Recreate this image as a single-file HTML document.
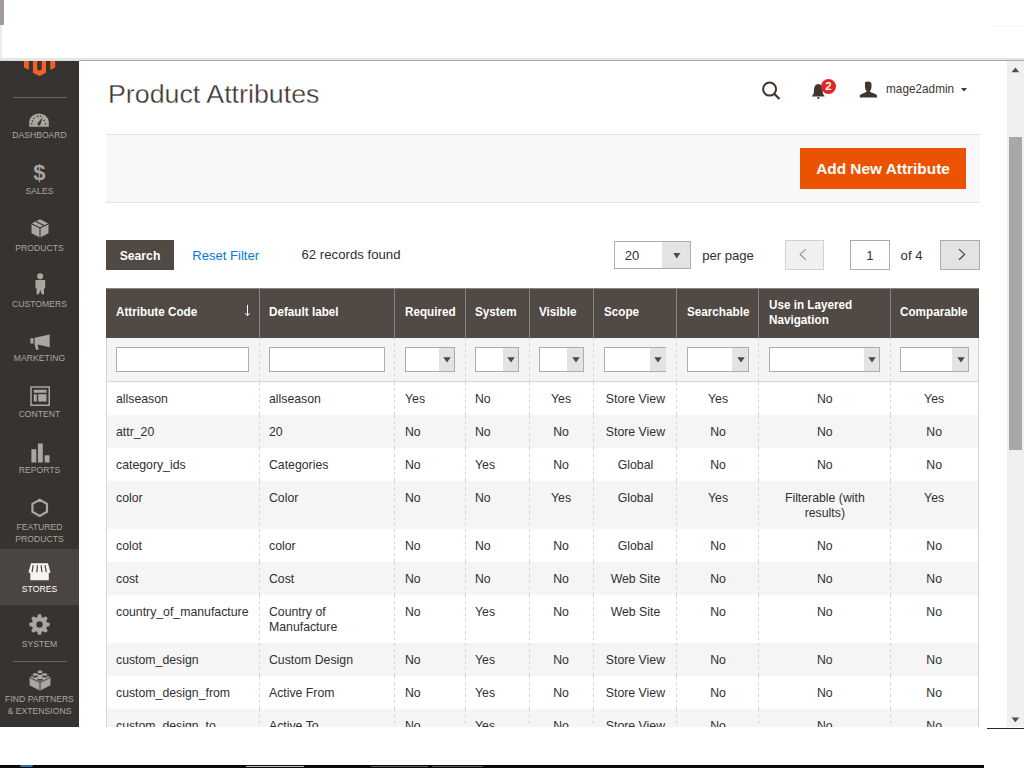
<!DOCTYPE html>
<html><head><meta charset="utf-8"><title>Product Attributes</title>
<style>
html,body{margin:0;padding:0;width:1024px;height:768px;overflow:hidden;background:#fff}
body{position:relative;font-family:"Liberation Sans",sans-serif}
body div, body svg{position:absolute}
.t{white-space:nowrap}
</style></head><body>
<div style="left:0px;top:0px;width:3.5px;height:25px;background:#a39c9c"></div>
<div style="left:0px;top:25px;width:2px;height:33px;background:#ececec"></div>
<div style="left:991px;top:26px;width:33px;height:1px;background:#f6f6f4"></div>
<div style="left:0px;top:58px;width:1024px;height:2px;background:#e6e6e6"></div>
<div style="left:79px;top:60px;width:945px;height:1px;background:#ababab"></div>
<div style="left:0px;top:60px;width:79px;height:1px;background:#dcdcdc"></div>
<div id="vp" style="left:0;top:61px;width:1007px;height:666px;overflow:hidden;background:#fff">
<div style="left:0;top:-61px;width:1007px;height:800px;">
<div style="left:0px;top:61px;width:79px;height:666px;background:#373330"></div>
<div style="left:0px;top:548.5px;width:79px;height:56.7px;background:#4a4542"></div>
<svg style="position:absolute;left:0;top:0" width="79" height="80" viewBox="0 0 79 80"><path fill="#ef6424" d="M23.9 61H28.8V69.7L23.9 67.4Z M50.3 61H55.2V67.4L50.3 69.7Z M32.9 61H37.2V69.5L39.5 70.7L41.7 69.5V61H46V72.8L39.5 76L32.9 72.8Z"/></svg>
<div style="left:13px;top:97px;width:54px;height:1px;background:#6f6660"></div>
<div style="left:13px;top:661px;width:54px;height:1px;background:#6f6660"></div>
<div class="t" style="left:0px;top:129.37px;font-size:9.6px;line-height:12.0px;color:#aaa6a0;width:79px;text-align:center;transform:scaleX(0.9);transform-origin:50% 0;">DASHBOARD</div>
<div class="t" style="left:0px;top:185.37px;font-size:9.6px;line-height:12.0px;color:#aaa6a0;width:79px;text-align:center;transform:scaleX(0.9);transform-origin:50% 0;">SALES</div>
<div class="t" style="left:0px;top:241.67px;font-size:9.6px;line-height:12.0px;color:#aaa6a0;width:79px;text-align:center;transform:scaleX(0.9);transform-origin:50% 0;">PRODUCTS</div>
<div class="t" style="left:0px;top:297.67px;font-size:9.6px;line-height:12.0px;color:#aaa6a0;width:79px;text-align:center;transform:scaleX(0.9);transform-origin:50% 0;">CUSTOMERS</div>
<div class="t" style="left:0px;top:352.37px;font-size:9.6px;line-height:12.0px;color:#aaa6a0;width:79px;text-align:center;transform:scaleX(0.9);transform-origin:50% 0;">MARKETING</div>
<div class="t" style="left:0px;top:408.37px;font-size:9.6px;line-height:12.0px;color:#aaa6a0;width:79px;text-align:center;transform:scaleX(0.9);transform-origin:50% 0;">CONTENT</div>
<div class="t" style="left:0px;top:464.47px;font-size:9.6px;line-height:12.0px;color:#aaa6a0;width:79px;text-align:center;transform:scaleX(0.9);transform-origin:50% 0;">REPORTS</div>
<div class="t" style="left:0px;top:520.97px;font-size:9.6px;line-height:12.0px;color:#aaa6a0;width:79px;text-align:center;transform:scaleX(0.9);transform-origin:50% 0;">FEATURED</div>
<div class="t" style="left:0px;top:532.57px;font-size:9.6px;line-height:12.0px;color:#aaa6a0;width:79px;text-align:center;transform:scaleX(0.9);transform-origin:50% 0;">PRODUCTS</div>
<div class="t" style="left:0px;top:582.77px;font-size:9.6px;line-height:12.0px;color:#ffffff;width:79px;text-align:center;transform:scaleX(0.9);transform-origin:50% 0;">STORES</div>
<div class="t" style="left:0px;top:637.77px;font-size:9.6px;line-height:12.0px;color:#aaa6a0;width:79px;text-align:center;transform:scaleX(0.9);transform-origin:50% 0;">SYSTEM</div>
<div class="t" style="left:0px;top:693.37px;font-size:9.6px;line-height:12.0px;color:#aaa6a0;width:79px;text-align:center;transform:scaleX(0.9);transform-origin:50% 0;">FIND PARTNERS</div>
<div class="t" style="left:0px;top:705.07px;font-size:9.6px;line-height:12.0px;color:#aaa6a0;width:79px;text-align:center;transform:scaleX(0.9);transform-origin:50% 0;">&amp; EXTENSIONS</div>
<svg style="position:absolute;left:29px;top:112.5px" width="20" height="15" viewBox="0 0 20 15"><path fill="#aaa6a0" d="M0.2 13.8V9A9.8 8.6 0 0 1 19.8 9V13.8Z"/><g fill="#373330"><circle cx="5" cy="5.2" r="0.8"/><circle cx="3.5" cy="8" r="0.8"/><circle cx="2.8" cy="10.8" r="0.8"/><circle cx="8.5" cy="3.2" r="0.8"/><circle cx="11.5" cy="3.2" r="0.8"/><circle cx="15" cy="7.5" r="0.8"/><circle cx="16.5" cy="10.8" r="0.8"/></g><path fill="#373330" d="M8.6 10.3L13.6 4.2L11.3 11.7A1.5 1.5 0 1 1 8.6 10.3Z"/></svg>
<div class="t" style="left:33.3px;top:159.6px;font-size:22px;line-height:26px;font-weight:bold;color:#aaa6a0">$</div>
<svg style="position:absolute;left:30.5px;top:218.5px" width="18" height="19" viewBox="0 0 18 19"><path fill="#aaa6a0" d="M9 0.3L17.5 4.5V14.2L9 18.5L0.5 14.2V4.5Z"/><path fill="none" stroke="#373330" stroke-width="1.1" d="M0.5 4.7L9 9L17.5 4.7 M9 9V18.5 M5 2.5L13.5 6.8"/></svg>
<svg style="position:absolute;left:34.5px;top:272.5px" width="11" height="22" viewBox="0 0 11 22"><circle cx="5.2" cy="3.2" r="3" fill="#aaa6a0"/><path fill="#aaa6a0" d="M0.5 7H10.2V15L9 15.5V21.3H6.7L5.3 17L3.9 21.3H1.6V15.5L0.5 15Z"/></svg>
<svg style="position:absolute;left:29.5px;top:333.5px" width="20" height="16" viewBox="0 0 20 16"><path fill="#aaa6a0" d="M0.4 4.3H3.5V9.4H0.4Z M4.6 3.7L19.7 0.4V13.3L7.6 10.6L8.6 15.8H6L4.6 10.2Z"/></svg>
<svg style="position:absolute;left:29.5px;top:385.5px" width="21" height="21" viewBox="0 0 21 21"><path fill="none" stroke="#aaa6a0" stroke-width="1.5" d="M1.05 1.05H19.25V19.25H1.05Z"/><path fill="#aaa6a0" d="M3.8 3.8H16.5V6.8H3.8Z M3.8 8.2H6.8V15.5H3.8Z M8.2 8.2H16.5V15.5H8.2Z"/></svg>
<svg style="position:absolute;left:30.5px;top:442.5px" width="20" height="20" viewBox="0 0 20 20"><path fill="#aaa6a0" d="M0.4 6.3H5.3V19.4H0.4Z M6.9 0.4H11.8V19.4H6.9Z M13.6 12.3H18.5V19.4H13.6Z"/></svg>
<svg style="position:absolute;left:31px;top:497.5px" width="18" height="20" viewBox="0 0 18 20"><path fill="none" stroke="#aaa6a0" stroke-width="2.2" stroke-linejoin="miter" d="M8.7 1.73L15.95 5.92V13.78L8.7 17.97L1.45 13.78V5.92Z"/></svg>
<svg style="position:absolute;left:28px;top:562.5px" width="23" height="18" viewBox="0 0 23 18"><path fill="#f7f3ef" d="M3 0.3H20L22.5 9.5L20.8 10.2V17.3H2.3V10.2L0.5 9.5Z"/><path fill="none" stroke="#4a4542" stroke-width="1.2" d="M5.1 2.2L4.1 9.2 M9.4 2.2L8.8 9.2 M13.1 2.2L13.9 9.2 M17 2.2L18.3 9.2"/></svg>
<svg style="position:absolute;left:28.85px;top:614.1px" width="21" height="21" viewBox="0 0 21 21"><path fill="#aaa6a0" d="M8.28 3.23L8.98 0.31L12.02 0.31L12.72 3.23L14.07 3.79L16.63 2.22L18.78 4.37L17.21 6.93L17.77 8.28L20.69 8.98L20.69 12.02L17.77 12.72L17.21 14.07L18.78 16.63L16.63 18.78L14.07 17.21L12.72 17.77L12.02 20.69L8.98 20.69L8.28 17.77L6.93 17.21L4.37 18.78L2.22 16.63L3.79 14.07L3.23 12.72L0.31 12.02L0.31 8.98L3.23 8.28L3.79 6.93L2.22 4.37L4.37 2.22L6.93 3.79Z"/><circle cx="10.5" cy="10.5" r="3.2" fill="#373330"/></svg>
<svg style="position:absolute;left:28.5px;top:669px" width="22" height="23" viewBox="0 0 22 23"><path fill="#aaa6a0" d="M0.6 8.2L11 3L21.5 8.2V16.2L11 21.7L0.6 16.2Z"/><path fill="none" stroke="#373330" stroke-width="0.9" d="M0.6 8.4L11 13.4L21.5 8.4 M11 13.4V21.7"/><ellipse cx="11" cy="4.2" rx="2.7" ry="1.5" fill="#373330"/><ellipse cx="11" cy="2.9" rx="2.6" ry="1.4" fill="#aaa6a0"/><ellipse cx="6.1" cy="6.8999999999999995" rx="2.7" ry="1.5" fill="#373330"/><ellipse cx="6.1" cy="5.6" rx="2.6" ry="1.4" fill="#aaa6a0"/><ellipse cx="15.9" cy="6.8999999999999995" rx="2.7" ry="1.5" fill="#373330"/><ellipse cx="15.9" cy="5.6" rx="2.6" ry="1.4" fill="#aaa6a0"/><ellipse cx="11" cy="10.200000000000001" rx="2.7" ry="1.5" fill="#373330"/><ellipse cx="11" cy="8.9" rx="2.6" ry="1.4" fill="#aaa6a0"/></svg>
<div class="t" style="left:107.8px;top:78.92px;font-size:25.4px;line-height:31.75px;color:#41362f;-webkit-text-stroke:0.3px #fff;transform:scaleX(1.055);transform-origin:0 0;">Product Attributes</div>
<svg style="position:absolute;left:760px;top:80px" width="22" height="22" viewBox="0 0 22 22"><circle cx="9.6" cy="9.1" r="6.5" fill="none" stroke="#41362f" stroke-width="2"/><path d="M14.2 13.8L19.5 19" stroke="#41362f" stroke-width="2.2"/></svg>
<svg style="position:absolute;left:810px;top:80px" width="20" height="20" viewBox="0 0 20 20"><path fill="#41362f" d="M2 16.6L2.2 15.8Q3.8 14.8 3.9 12L4 9.5Q4.3 4.4 8.3 4.1Q12.3 4.4 12.6 9.5L12.7 12Q12.8 14.8 14.4 15.8L14.6 16.6Z"/><ellipse cx="8.3" cy="17.9" rx="1.3" ry="0.9" fill="#41362f"/></svg>
<div style="left:821px;top:78.8px;width:15px;height:15px;border-radius:50%;background:#e22626"></div>
<div class="t" style="left:821px;top:79.42px;font-size:11.3px;line-height:14.12px;color:#fff;font-weight:bold;width:15px;text-align:center;">2</div>
<svg style="position:absolute;left:859px;top:80.5px" width="19" height="17" viewBox="0 0 19 17"><path fill="#41362f" d="M6 1.5Q6.5 0.4 9 0.4Q12 0.4 12.5 2.5V6.5Q12 9 11 10V10.8L17.3 13.5Q18 14 18 15V16.5H0.8V15Q0.8 14 1.6 13.5L7.6 10.8V10Q6.2 8.8 6 6.5Z"/></svg>
<div class="t" style="left:885.5px;top:82.06px;font-size:12.6px;line-height:15.75px;color:#41362f;transform:scaleX(0.936);transform-origin:0 0;">mage2admin</div>
<svg style="position:absolute;left:961px;top:88px" width="6" height="4" viewBox="0 0 6 4"><path d="M0 0H6L3 3.6Z" fill="#41362f"/></svg>
<div style="left:106px;top:134px;width:874px;height:69px;background:#f8f8f8;border-top:1px solid #e3e3e3;border-bottom:1px solid #e3e3e3;box-sizing:border-box"></div>
<div style="left:800px;top:148px;width:166px;height:41px;background:#eb5202"></div>
<div class="t" style="left:800px;top:158.64px;font-size:15.4px;line-height:19.25px;color:#fff;font-weight:bold;width:166px;text-align:center;">Add New Attribute</div>
<div style="left:106px;top:240px;width:68px;height:30px;background:#514943"></div>
<div class="t" style="left:106px;top:248.75px;font-size:12.2px;line-height:15.25px;color:#fff;font-weight:bold;width:68px;text-align:center;">Search</div>
<div class="t" style="left:192.3px;top:247.90px;font-size:13.07px;line-height:16.34px;color:#007bdb;">Reset Filter</div>
<div class="t" style="left:301.5px;top:246.68px;font-size:13.2px;line-height:16.5px;color:#303030;">62 records found</div>
<div style="left:614.4px;top:241.4px;width:76.2px;height:27.3px;background:#fff;border:1px solid #adadad;box-sizing:border-box"></div>
<div style="left:662px;top:242.4px;width:27.6px;height:25.3px;background:#e3e3e3"></div>
<svg style="position:absolute;left:673px;top:253px" width="8" height="6" viewBox="0 0 8 6"><path d="M0.3 0H7.3L3.8 5.6Z" fill="#514943"/></svg>
<div class="t" style="left:624.8px;top:247.77px;font-size:13.1px;line-height:16.38px;color:#303030;">20</div>
<div class="t" style="left:702.2px;top:247.77px;font-size:13.1px;line-height:16.38px;color:#303030;">per page</div>
<div style="left:785px;top:240.2px;width:39px;height:29.7px;background:#f0f0f0;border:1px solid #d1d1d1;box-sizing:border-box"></div>
<svg style="position:absolute;left:796px;top:247px" width="14" height="16" viewBox="0 0 14 16"><path d="M9.8 2.1L4.2 7.4L9.8 12.7" fill="none" stroke="#a09a96" stroke-width="1.3"/></svg>
<div style="left:850.3px;top:240.2px;width:39.4px;height:29.7px;background:#fff;border:1px solid #adadad;box-sizing:border-box"></div>
<div class="t" style="left:850.3px;top:248.47px;font-size:13.1px;line-height:16.38px;color:#303030;width:39.4px;text-align:center;">1</div>
<div class="t" style="left:900.6px;top:247.77px;font-size:13.1px;line-height:16.38px;color:#303030;">of 4</div>
<div style="left:940.4px;top:240.2px;width:39.6px;height:29.7px;background:#e3e3e3;border:1px solid #adadad;box-sizing:border-box"></div>
<svg style="position:absolute;left:955px;top:247px" width="14" height="16" viewBox="0 0 14 16"><path d="M4 2.1L9.6 7.4L4 12.7" fill="none" stroke="#514943" stroke-width="1.3"/></svg>
<div style="left:106.4px;top:288px;width:872.2px;height:50px;background:#514943;border-top:1px solid #8a837f;box-sizing:border-box"></div>
<div style="left:258.7px;top:288px;width:1px;height:50px;background:#8a837f"></div>
<div style="left:394.1px;top:288px;width:1px;height:50px;background:#8a837f"></div>
<div style="left:464.9px;top:288px;width:1px;height:50px;background:#8a837f"></div>
<div style="left:528.9px;top:288px;width:1px;height:50px;background:#8a837f"></div>
<div style="left:593.1px;top:288px;width:1px;height:50px;background:#8a837f"></div>
<div style="left:676.0px;top:288px;width:1px;height:50px;background:#8a837f"></div>
<div style="left:758.1px;top:288px;width:1px;height:50px;background:#8a837f"></div>
<div style="left:889.8px;top:288px;width:1px;height:50px;background:#8a837f"></div>
<div class="t" style="left:116.4px;top:304.65px;font-size:12.4px;line-height:15.5px;color:#fff;font-weight:bold;transform:scaleX(0.944);transform-origin:0 0;">Attribute Code</div>
<div class="t" style="left:269.2px;top:304.65px;font-size:12.4px;line-height:15.5px;color:#fff;font-weight:bold;transform:scaleX(0.944);transform-origin:0 0;">Default label</div>
<div class="t" style="left:404.6px;top:304.65px;font-size:12.4px;line-height:15.5px;color:#fff;font-weight:bold;transform:scaleX(0.944);transform-origin:0 0;">Required</div>
<div class="t" style="left:475.4px;top:304.65px;font-size:12.4px;line-height:15.5px;color:#fff;font-weight:bold;transform:scaleX(0.944);transform-origin:0 0;">System</div>
<div class="t" style="left:539.4px;top:304.65px;font-size:12.4px;line-height:15.5px;color:#fff;font-weight:bold;transform:scaleX(0.944);transform-origin:0 0;">Visible</div>
<div class="t" style="left:603.6px;top:304.65px;font-size:12.4px;line-height:15.5px;color:#fff;font-weight:bold;transform:scaleX(0.944);transform-origin:0 0;">Scope</div>
<div class="t" style="left:686.5px;top:304.65px;font-size:12.4px;line-height:15.5px;color:#fff;font-weight:bold;transform:scaleX(0.944);transform-origin:0 0;">Searchable</div>
<div class="t" style="left:900.3px;top:304.65px;font-size:12.4px;line-height:15.5px;color:#fff;font-weight:bold;transform:scaleX(0.944);transform-origin:0 0;">Comparable</div>
<div class="t" style="left:768.6px;top:297.95px;font-size:12.4px;line-height:15.5px;color:#fff;font-weight:bold;transform:scaleX(0.944);transform-origin:0 0;">Use in Layered</div>
<div class="t" style="left:768.6px;top:312.55px;font-size:12.4px;line-height:15.5px;color:#fff;font-weight:bold;transform:scaleX(0.944);transform-origin:0 0;">Navigation</div>
<svg style="position:absolute;left:243.5px;top:304px" width="7" height="13" viewBox="0 0 7 13"><path d="M3.5 0.8V11.5" stroke="#fff" stroke-width="1"/><path d="M1.3 9.2L3.5 11.8L5.7 9.2" fill="none" stroke="#fff" stroke-width="1"/></svg>
<div style="left:106.4px;top:338px;width:872.2px;height:43.80000000000001px;background:#f4f4f4;border-bottom:1px solid #d6d6d6;box-sizing:border-box"></div>
<div style="left:116.4px;top:347.3px;width:132.79999999999998px;height:24.4px;background:#fff;border:1px solid #adadad;box-sizing:border-box"></div>
<div style="left:269.2px;top:347.3px;width:115.40000000000003px;height:24.4px;background:#fff;border:1px solid #adadad;box-sizing:border-box"></div>
<div style="left:404.6px;top:347.3px;width:50.799999999999955px;height:24.399999999999977px;background:#fff;border:1px solid #adadad;box-sizing:border-box"></div>
<div style="left:438.9px;top:348.3px;width:15.5px;height:22.399999999999977px;background:#e3e3e3"></div>
<svg style="position:absolute;left:443.3px;top:356.7px" width="8" height="6" viewBox="0 0 8 6"><path d="M0.25 0.2H7.75L4 5.5Z" fill="#514943"/></svg>
<div style="left:475.4px;top:347.3px;width:44.0px;height:24.399999999999977px;background:#fff;border:1px solid #adadad;box-sizing:border-box"></div>
<div style="left:502.9px;top:348.3px;width:15.5px;height:22.399999999999977px;background:#e3e3e3"></div>
<svg style="position:absolute;left:507.3px;top:356.7px" width="8" height="6" viewBox="0 0 8 6"><path d="M0.25 0.2H7.75L4 5.5Z" fill="#514943"/></svg>
<div style="left:539.4px;top:347.3px;width:44.200000000000045px;height:24.399999999999977px;background:#fff;border:1px solid #adadad;box-sizing:border-box"></div>
<div style="left:567.1px;top:348.3px;width:15.5px;height:22.399999999999977px;background:#e3e3e3"></div>
<svg style="position:absolute;left:571.5px;top:356.7px" width="8" height="6" viewBox="0 0 8 6"><path d="M0.25 0.2H7.75L4 5.5Z" fill="#514943"/></svg>
<div style="left:603.6px;top:347.3px;width:62.89999999999998px;height:24.399999999999977px;background:#fff;border:1px solid #adadad;box-sizing:border-box"></div>
<div style="left:650.0px;top:348.3px;width:15.5px;height:22.399999999999977px;background:#e3e3e3"></div>
<svg style="position:absolute;left:654.4px;top:356.7px" width="8" height="6" viewBox="0 0 8 6"><path d="M0.25 0.2H7.75L4 5.5Z" fill="#514943"/></svg>
<div style="left:686.5px;top:347.3px;width:62.10000000000002px;height:24.399999999999977px;background:#fff;border:1px solid #adadad;box-sizing:border-box"></div>
<div style="left:732.1px;top:348.3px;width:15.5px;height:22.399999999999977px;background:#e3e3e3"></div>
<svg style="position:absolute;left:736.5px;top:356.7px" width="8" height="6" viewBox="0 0 8 6"><path d="M0.25 0.2H7.75L4 5.5Z" fill="#514943"/></svg>
<div style="left:768.6px;top:347.3px;width:111.69999999999993px;height:24.399999999999977px;background:#fff;border:1px solid #adadad;box-sizing:border-box"></div>
<div style="left:863.8px;top:348.3px;width:15.5px;height:22.399999999999977px;background:#e3e3e3"></div>
<svg style="position:absolute;left:868.2px;top:356.7px" width="8" height="6" viewBox="0 0 8 6"><path d="M0.25 0.2H7.75L4 5.5Z" fill="#514943"/></svg>
<div style="left:900.3px;top:347.3px;width:68.30000000000007px;height:24.399999999999977px;background:#fff;border:1px solid #adadad;box-sizing:border-box"></div>
<div style="left:952.1px;top:348.3px;width:15.5px;height:22.399999999999977px;background:#e3e3e3"></div>
<svg style="position:absolute;left:956.5px;top:356.7px" width="8" height="6" viewBox="0 0 8 6"><path d="M0.25 0.2H7.75L4 5.5Z" fill="#514943"/></svg>
<div style="left:106.4px;top:381.8px;width:872.2px;height:33.1px;background:#ffffff"></div>
<div class="t" style="left:116.4px;top:391.16px;font-size:12.8px;line-height:16.0px;color:#303030;transform:scaleX(0.96);transform-origin:0 0;">allseason</div>
<div class="t" style="left:269.2px;top:391.16px;font-size:12.8px;line-height:16.0px;color:#303030;transform:scaleX(0.96);transform-origin:0 0;">allseason</div>
<div class="t" style="left:404.6px;top:391.16px;font-size:12.8px;line-height:16.0px;color:#303030;transform:scaleX(0.96);transform-origin:0 0;">Yes</div>
<div class="t" style="left:475.4px;top:391.16px;font-size:12.8px;line-height:16.0px;color:#303030;transform:scaleX(0.96);transform-origin:0 0;">No</div>
<div class="t" style="left:529.4px;top:391.16px;font-size:12.8px;line-height:16.0px;color:#303030;width:64.20000000000005px;text-align:center;transform:scaleX(0.96);transform-origin:50% 0;">Yes</div>
<div class="t" style="left:593.6px;top:391.16px;font-size:12.8px;line-height:16.0px;color:#303030;width:82.89999999999998px;text-align:center;transform:scaleX(0.96);transform-origin:50% 0;">Store View</div>
<div class="t" style="left:676.5px;top:391.16px;font-size:12.8px;line-height:16.0px;color:#303030;width:82.10000000000002px;text-align:center;transform:scaleX(0.96);transform-origin:50% 0;">Yes</div>
<div class="t" style="left:758.6px;top:391.16px;font-size:12.8px;line-height:16.0px;color:#303030;width:131.69999999999993px;text-align:center;transform:scaleX(0.96);transform-origin:50% 0;">No</div>
<div class="t" style="left:890.3px;top:391.16px;font-size:12.8px;line-height:16.0px;color:#303030;width:88.30000000000007px;text-align:center;transform:scaleX(0.96);transform-origin:50% 0;">Yes</div>
<div style="left:106.4px;top:414.90000000000003px;width:872.2px;height:33.1px;background:#f5f5f5"></div>
<div class="t" style="left:116.4px;top:424.26px;font-size:12.8px;line-height:16.0px;color:#303030;transform:scaleX(0.96);transform-origin:0 0;">attr_20</div>
<div class="t" style="left:269.2px;top:424.26px;font-size:12.8px;line-height:16.0px;color:#303030;transform:scaleX(0.96);transform-origin:0 0;">20</div>
<div class="t" style="left:404.6px;top:424.26px;font-size:12.8px;line-height:16.0px;color:#303030;transform:scaleX(0.96);transform-origin:0 0;">No</div>
<div class="t" style="left:475.4px;top:424.26px;font-size:12.8px;line-height:16.0px;color:#303030;transform:scaleX(0.96);transform-origin:0 0;">No</div>
<div class="t" style="left:529.4px;top:424.26px;font-size:12.8px;line-height:16.0px;color:#303030;width:64.20000000000005px;text-align:center;transform:scaleX(0.96);transform-origin:50% 0;">No</div>
<div class="t" style="left:593.6px;top:424.26px;font-size:12.8px;line-height:16.0px;color:#303030;width:82.89999999999998px;text-align:center;transform:scaleX(0.96);transform-origin:50% 0;">Store View</div>
<div class="t" style="left:676.5px;top:424.26px;font-size:12.8px;line-height:16.0px;color:#303030;width:82.10000000000002px;text-align:center;transform:scaleX(0.96);transform-origin:50% 0;">No</div>
<div class="t" style="left:758.6px;top:424.26px;font-size:12.8px;line-height:16.0px;color:#303030;width:131.69999999999993px;text-align:center;transform:scaleX(0.96);transform-origin:50% 0;">No</div>
<div class="t" style="left:890.3px;top:424.26px;font-size:12.8px;line-height:16.0px;color:#303030;width:88.30000000000007px;text-align:center;transform:scaleX(0.96);transform-origin:50% 0;">No</div>
<div style="left:106.4px;top:448.00000000000006px;width:872.2px;height:33.1px;background:#ffffff"></div>
<div class="t" style="left:116.4px;top:457.36px;font-size:12.8px;line-height:16.0px;color:#303030;transform:scaleX(0.96);transform-origin:0 0;">category_ids</div>
<div class="t" style="left:269.2px;top:457.36px;font-size:12.8px;line-height:16.0px;color:#303030;transform:scaleX(0.96);transform-origin:0 0;">Categories</div>
<div class="t" style="left:404.6px;top:457.36px;font-size:12.8px;line-height:16.0px;color:#303030;transform:scaleX(0.96);transform-origin:0 0;">No</div>
<div class="t" style="left:475.4px;top:457.36px;font-size:12.8px;line-height:16.0px;color:#303030;transform:scaleX(0.96);transform-origin:0 0;">Yes</div>
<div class="t" style="left:529.4px;top:457.36px;font-size:12.8px;line-height:16.0px;color:#303030;width:64.20000000000005px;text-align:center;transform:scaleX(0.96);transform-origin:50% 0;">No</div>
<div class="t" style="left:593.6px;top:457.36px;font-size:12.8px;line-height:16.0px;color:#303030;width:82.89999999999998px;text-align:center;transform:scaleX(0.96);transform-origin:50% 0;">Global</div>
<div class="t" style="left:676.5px;top:457.36px;font-size:12.8px;line-height:16.0px;color:#303030;width:82.10000000000002px;text-align:center;transform:scaleX(0.96);transform-origin:50% 0;">No</div>
<div class="t" style="left:758.6px;top:457.36px;font-size:12.8px;line-height:16.0px;color:#303030;width:131.69999999999993px;text-align:center;transform:scaleX(0.96);transform-origin:50% 0;">No</div>
<div class="t" style="left:890.3px;top:457.36px;font-size:12.8px;line-height:16.0px;color:#303030;width:88.30000000000007px;text-align:center;transform:scaleX(0.96);transform-origin:50% 0;">No</div>
<div style="left:106.4px;top:481.1000000000001px;width:872.2px;height:47.6px;background:#f5f5f5"></div>
<div class="t" style="left:116.4px;top:490.46px;font-size:12.8px;line-height:16.0px;color:#303030;transform:scaleX(0.96);transform-origin:0 0;">color</div>
<div class="t" style="left:269.2px;top:490.46px;font-size:12.8px;line-height:16.0px;color:#303030;transform:scaleX(0.96);transform-origin:0 0;">Color</div>
<div class="t" style="left:404.6px;top:490.46px;font-size:12.8px;line-height:16.0px;color:#303030;transform:scaleX(0.96);transform-origin:0 0;">No</div>
<div class="t" style="left:475.4px;top:490.46px;font-size:12.8px;line-height:16.0px;color:#303030;transform:scaleX(0.96);transform-origin:0 0;">No</div>
<div class="t" style="left:529.4px;top:490.46px;font-size:12.8px;line-height:16.0px;color:#303030;width:64.20000000000005px;text-align:center;transform:scaleX(0.96);transform-origin:50% 0;">Yes</div>
<div class="t" style="left:593.6px;top:490.46px;font-size:12.8px;line-height:16.0px;color:#303030;width:82.89999999999998px;text-align:center;transform:scaleX(0.96);transform-origin:50% 0;">Global</div>
<div class="t" style="left:676.5px;top:490.46px;font-size:12.8px;line-height:16.0px;color:#303030;width:82.10000000000002px;text-align:center;transform:scaleX(0.96);transform-origin:50% 0;">Yes</div>
<div class="t" style="left:758.6px;top:490.46px;font-size:12.8px;line-height:16.0px;color:#303030;width:131.69999999999993px;text-align:center;transform:scaleX(0.96);transform-origin:50% 0;">Filterable (with</div>
<div class="t" style="left:758.6px;top:505.46px;font-size:12.8px;line-height:16.0px;color:#303030;width:131.69999999999993px;text-align:center;transform:scaleX(0.96);transform-origin:50% 0;">results)</div>
<div class="t" style="left:890.3px;top:490.46px;font-size:12.8px;line-height:16.0px;color:#303030;width:88.30000000000007px;text-align:center;transform:scaleX(0.96);transform-origin:50% 0;">Yes</div>
<div style="left:106.4px;top:528.7px;width:872.2px;height:33.1px;background:#ffffff"></div>
<div class="t" style="left:116.4px;top:538.06px;font-size:12.8px;line-height:16.0px;color:#303030;transform:scaleX(0.96);transform-origin:0 0;">colot</div>
<div class="t" style="left:269.2px;top:538.06px;font-size:12.8px;line-height:16.0px;color:#303030;transform:scaleX(0.96);transform-origin:0 0;">color</div>
<div class="t" style="left:404.6px;top:538.06px;font-size:12.8px;line-height:16.0px;color:#303030;transform:scaleX(0.96);transform-origin:0 0;">No</div>
<div class="t" style="left:475.4px;top:538.06px;font-size:12.8px;line-height:16.0px;color:#303030;transform:scaleX(0.96);transform-origin:0 0;">No</div>
<div class="t" style="left:529.4px;top:538.06px;font-size:12.8px;line-height:16.0px;color:#303030;width:64.20000000000005px;text-align:center;transform:scaleX(0.96);transform-origin:50% 0;">No</div>
<div class="t" style="left:593.6px;top:538.06px;font-size:12.8px;line-height:16.0px;color:#303030;width:82.89999999999998px;text-align:center;transform:scaleX(0.96);transform-origin:50% 0;">Global</div>
<div class="t" style="left:676.5px;top:538.06px;font-size:12.8px;line-height:16.0px;color:#303030;width:82.10000000000002px;text-align:center;transform:scaleX(0.96);transform-origin:50% 0;">No</div>
<div class="t" style="left:758.6px;top:538.06px;font-size:12.8px;line-height:16.0px;color:#303030;width:131.69999999999993px;text-align:center;transform:scaleX(0.96);transform-origin:50% 0;">No</div>
<div class="t" style="left:890.3px;top:538.06px;font-size:12.8px;line-height:16.0px;color:#303030;width:88.30000000000007px;text-align:center;transform:scaleX(0.96);transform-origin:50% 0;">No</div>
<div style="left:106.4px;top:561.8000000000001px;width:872.2px;height:33.1px;background:#f5f5f5"></div>
<div class="t" style="left:116.4px;top:571.16px;font-size:12.8px;line-height:16.0px;color:#303030;transform:scaleX(0.96);transform-origin:0 0;">cost</div>
<div class="t" style="left:269.2px;top:571.16px;font-size:12.8px;line-height:16.0px;color:#303030;transform:scaleX(0.96);transform-origin:0 0;">Cost</div>
<div class="t" style="left:404.6px;top:571.16px;font-size:12.8px;line-height:16.0px;color:#303030;transform:scaleX(0.96);transform-origin:0 0;">No</div>
<div class="t" style="left:475.4px;top:571.16px;font-size:12.8px;line-height:16.0px;color:#303030;transform:scaleX(0.96);transform-origin:0 0;">No</div>
<div class="t" style="left:529.4px;top:571.16px;font-size:12.8px;line-height:16.0px;color:#303030;width:64.20000000000005px;text-align:center;transform:scaleX(0.96);transform-origin:50% 0;">No</div>
<div class="t" style="left:593.6px;top:571.16px;font-size:12.8px;line-height:16.0px;color:#303030;width:82.89999999999998px;text-align:center;transform:scaleX(0.96);transform-origin:50% 0;">Web Site</div>
<div class="t" style="left:676.5px;top:571.16px;font-size:12.8px;line-height:16.0px;color:#303030;width:82.10000000000002px;text-align:center;transform:scaleX(0.96);transform-origin:50% 0;">No</div>
<div class="t" style="left:758.6px;top:571.16px;font-size:12.8px;line-height:16.0px;color:#303030;width:131.69999999999993px;text-align:center;transform:scaleX(0.96);transform-origin:50% 0;">No</div>
<div class="t" style="left:890.3px;top:571.16px;font-size:12.8px;line-height:16.0px;color:#303030;width:88.30000000000007px;text-align:center;transform:scaleX(0.96);transform-origin:50% 0;">No</div>
<div style="left:106.4px;top:594.9000000000001px;width:872.2px;height:47.6px;background:#ffffff"></div>
<div class="t" style="left:116.4px;top:604.26px;font-size:12.8px;line-height:16.0px;color:#303030;transform:scaleX(0.96);transform-origin:0 0;">country_of_manufacture</div>
<div class="t" style="left:269.2px;top:604.26px;font-size:12.8px;line-height:16.0px;color:#303030;transform:scaleX(0.96);transform-origin:0 0;">Country of</div>
<div class="t" style="left:269.2px;top:619.26px;font-size:12.8px;line-height:16.0px;color:#303030;transform:scaleX(0.96);transform-origin:0 0;">Manufacture</div>
<div class="t" style="left:404.6px;top:604.26px;font-size:12.8px;line-height:16.0px;color:#303030;transform:scaleX(0.96);transform-origin:0 0;">No</div>
<div class="t" style="left:475.4px;top:604.26px;font-size:12.8px;line-height:16.0px;color:#303030;transform:scaleX(0.96);transform-origin:0 0;">Yes</div>
<div class="t" style="left:529.4px;top:604.26px;font-size:12.8px;line-height:16.0px;color:#303030;width:64.20000000000005px;text-align:center;transform:scaleX(0.96);transform-origin:50% 0;">No</div>
<div class="t" style="left:593.6px;top:604.26px;font-size:12.8px;line-height:16.0px;color:#303030;width:82.89999999999998px;text-align:center;transform:scaleX(0.96);transform-origin:50% 0;">Web Site</div>
<div class="t" style="left:676.5px;top:604.26px;font-size:12.8px;line-height:16.0px;color:#303030;width:82.10000000000002px;text-align:center;transform:scaleX(0.96);transform-origin:50% 0;">No</div>
<div class="t" style="left:758.6px;top:604.26px;font-size:12.8px;line-height:16.0px;color:#303030;width:131.69999999999993px;text-align:center;transform:scaleX(0.96);transform-origin:50% 0;">No</div>
<div class="t" style="left:890.3px;top:604.26px;font-size:12.8px;line-height:16.0px;color:#303030;width:88.30000000000007px;text-align:center;transform:scaleX(0.96);transform-origin:50% 0;">No</div>
<div style="left:106.4px;top:642.5000000000001px;width:872.2px;height:33.1px;background:#f5f5f5"></div>
<div class="t" style="left:116.4px;top:651.86px;font-size:12.8px;line-height:16.0px;color:#303030;transform:scaleX(0.96);transform-origin:0 0;">custom_design</div>
<div class="t" style="left:269.2px;top:651.86px;font-size:12.8px;line-height:16.0px;color:#303030;transform:scaleX(0.96);transform-origin:0 0;">Custom Design</div>
<div class="t" style="left:404.6px;top:651.86px;font-size:12.8px;line-height:16.0px;color:#303030;transform:scaleX(0.96);transform-origin:0 0;">No</div>
<div class="t" style="left:475.4px;top:651.86px;font-size:12.8px;line-height:16.0px;color:#303030;transform:scaleX(0.96);transform-origin:0 0;">Yes</div>
<div class="t" style="left:529.4px;top:651.86px;font-size:12.8px;line-height:16.0px;color:#303030;width:64.20000000000005px;text-align:center;transform:scaleX(0.96);transform-origin:50% 0;">No</div>
<div class="t" style="left:593.6px;top:651.86px;font-size:12.8px;line-height:16.0px;color:#303030;width:82.89999999999998px;text-align:center;transform:scaleX(0.96);transform-origin:50% 0;">Store View</div>
<div class="t" style="left:676.5px;top:651.86px;font-size:12.8px;line-height:16.0px;color:#303030;width:82.10000000000002px;text-align:center;transform:scaleX(0.96);transform-origin:50% 0;">No</div>
<div class="t" style="left:758.6px;top:651.86px;font-size:12.8px;line-height:16.0px;color:#303030;width:131.69999999999993px;text-align:center;transform:scaleX(0.96);transform-origin:50% 0;">No</div>
<div class="t" style="left:890.3px;top:651.86px;font-size:12.8px;line-height:16.0px;color:#303030;width:88.30000000000007px;text-align:center;transform:scaleX(0.96);transform-origin:50% 0;">No</div>
<div style="left:106.4px;top:675.6000000000001px;width:872.2px;height:33.1px;background:#ffffff"></div>
<div class="t" style="left:116.4px;top:684.96px;font-size:12.8px;line-height:16.0px;color:#303030;transform:scaleX(0.96);transform-origin:0 0;">custom_design_from</div>
<div class="t" style="left:269.2px;top:684.96px;font-size:12.8px;line-height:16.0px;color:#303030;transform:scaleX(0.96);transform-origin:0 0;">Active From</div>
<div class="t" style="left:404.6px;top:684.96px;font-size:12.8px;line-height:16.0px;color:#303030;transform:scaleX(0.96);transform-origin:0 0;">No</div>
<div class="t" style="left:475.4px;top:684.96px;font-size:12.8px;line-height:16.0px;color:#303030;transform:scaleX(0.96);transform-origin:0 0;">Yes</div>
<div class="t" style="left:529.4px;top:684.96px;font-size:12.8px;line-height:16.0px;color:#303030;width:64.20000000000005px;text-align:center;transform:scaleX(0.96);transform-origin:50% 0;">No</div>
<div class="t" style="left:593.6px;top:684.96px;font-size:12.8px;line-height:16.0px;color:#303030;width:82.89999999999998px;text-align:center;transform:scaleX(0.96);transform-origin:50% 0;">Store View</div>
<div class="t" style="left:676.5px;top:684.96px;font-size:12.8px;line-height:16.0px;color:#303030;width:82.10000000000002px;text-align:center;transform:scaleX(0.96);transform-origin:50% 0;">No</div>
<div class="t" style="left:758.6px;top:684.96px;font-size:12.8px;line-height:16.0px;color:#303030;width:131.69999999999993px;text-align:center;transform:scaleX(0.96);transform-origin:50% 0;">No</div>
<div class="t" style="left:890.3px;top:684.96px;font-size:12.8px;line-height:16.0px;color:#303030;width:88.30000000000007px;text-align:center;transform:scaleX(0.96);transform-origin:50% 0;">No</div>
<div style="left:106.4px;top:708.7000000000002px;width:872.2px;height:33.1px;background:#f5f5f5"></div>
<div class="t" style="left:116.4px;top:718.06px;font-size:12.8px;line-height:16.0px;color:#303030;transform:scaleX(0.96);transform-origin:0 0;">custom_design_to</div>
<div class="t" style="left:269.2px;top:718.06px;font-size:12.8px;line-height:16.0px;color:#303030;transform:scaleX(0.96);transform-origin:0 0;">Active To</div>
<div class="t" style="left:404.6px;top:718.06px;font-size:12.8px;line-height:16.0px;color:#303030;transform:scaleX(0.96);transform-origin:0 0;">No</div>
<div class="t" style="left:475.4px;top:718.06px;font-size:12.8px;line-height:16.0px;color:#303030;transform:scaleX(0.96);transform-origin:0 0;">Yes</div>
<div class="t" style="left:529.4px;top:718.06px;font-size:12.8px;line-height:16.0px;color:#303030;width:64.20000000000005px;text-align:center;transform:scaleX(0.96);transform-origin:50% 0;">No</div>
<div class="t" style="left:593.6px;top:718.06px;font-size:12.8px;line-height:16.0px;color:#303030;width:82.89999999999998px;text-align:center;transform:scaleX(0.96);transform-origin:50% 0;">Store View</div>
<div class="t" style="left:676.5px;top:718.06px;font-size:12.8px;line-height:16.0px;color:#303030;width:82.10000000000002px;text-align:center;transform:scaleX(0.96);transform-origin:50% 0;">No</div>
<div class="t" style="left:758.6px;top:718.06px;font-size:12.8px;line-height:16.0px;color:#303030;width:131.69999999999993px;text-align:center;transform:scaleX(0.96);transform-origin:50% 0;">No</div>
<div class="t" style="left:890.3px;top:718.06px;font-size:12.8px;line-height:16.0px;color:#303030;width:88.30000000000007px;text-align:center;transform:scaleX(0.96);transform-origin:50% 0;">No</div>
<div style="left:259px;top:338px;width:1px;height:44px;background:repeating-linear-gradient(to bottom,#d6d6d6 0,#d6d6d6 3px,transparent 3px,transparent 6px);background-position:0 -1px"></div>
<div style="left:259px;top:382px;width:1px;height:33px;background:repeating-linear-gradient(to bottom,#d6d6d6 0,#d6d6d6 3px,transparent 3px,transparent 6px);background-position:0 -0px"></div>
<div style="left:259px;top:415px;width:1px;height:33px;background:repeating-linear-gradient(to bottom,#d6d6d6 0,#d6d6d6 3px,transparent 3px,transparent 6px);background-position:0 -0px"></div>
<div style="left:259px;top:448px;width:1px;height:33px;background:repeating-linear-gradient(to bottom,#d6d6d6 0,#d6d6d6 3px,transparent 3px,transparent 6px);background-position:0 -0px"></div>
<div style="left:259px;top:481px;width:1px;height:48px;background:repeating-linear-gradient(to bottom,#d6d6d6 0,#d6d6d6 3px,transparent 3px,transparent 6px);background-position:0 -0px"></div>
<div style="left:259px;top:529px;width:1px;height:33px;background:repeating-linear-gradient(to bottom,#d6d6d6 0,#d6d6d6 3px,transparent 3px,transparent 6px);background-position:0 -0px"></div>
<div style="left:259px;top:562px;width:1px;height:33px;background:repeating-linear-gradient(to bottom,#d6d6d6 0,#d6d6d6 3px,transparent 3px,transparent 6px);background-position:0 -0px"></div>
<div style="left:259px;top:595px;width:1px;height:48px;background:repeating-linear-gradient(to bottom,#d6d6d6 0,#d6d6d6 3px,transparent 3px,transparent 6px);background-position:0 -0px"></div>
<div style="left:259px;top:643px;width:1px;height:33px;background:repeating-linear-gradient(to bottom,#d6d6d6 0,#d6d6d6 3px,transparent 3px,transparent 6px);background-position:0 -0px"></div>
<div style="left:259px;top:676px;width:1px;height:33px;background:repeating-linear-gradient(to bottom,#d6d6d6 0,#d6d6d6 3px,transparent 3px,transparent 6px);background-position:0 -0px"></div>
<div style="left:259px;top:709px;width:1px;height:18px;background:repeating-linear-gradient(to bottom,#d6d6d6 0,#d6d6d6 3px,transparent 3px,transparent 6px);background-position:0 -0px"></div>
<div style="left:394px;top:338px;width:1px;height:44px;background:repeating-linear-gradient(to bottom,#d6d6d6 0,#d6d6d6 3px,transparent 3px,transparent 6px);background-position:0 -1px"></div>
<div style="left:394px;top:382px;width:1px;height:33px;background:repeating-linear-gradient(to bottom,#d6d6d6 0,#d6d6d6 3px,transparent 3px,transparent 6px);background-position:0 -0px"></div>
<div style="left:394px;top:415px;width:1px;height:33px;background:repeating-linear-gradient(to bottom,#d6d6d6 0,#d6d6d6 3px,transparent 3px,transparent 6px);background-position:0 -0px"></div>
<div style="left:394px;top:448px;width:1px;height:33px;background:repeating-linear-gradient(to bottom,#d6d6d6 0,#d6d6d6 3px,transparent 3px,transparent 6px);background-position:0 -0px"></div>
<div style="left:394px;top:481px;width:1px;height:48px;background:repeating-linear-gradient(to bottom,#d6d6d6 0,#d6d6d6 3px,transparent 3px,transparent 6px);background-position:0 -0px"></div>
<div style="left:394px;top:529px;width:1px;height:33px;background:repeating-linear-gradient(to bottom,#d6d6d6 0,#d6d6d6 3px,transparent 3px,transparent 6px);background-position:0 -0px"></div>
<div style="left:394px;top:562px;width:1px;height:33px;background:repeating-linear-gradient(to bottom,#d6d6d6 0,#d6d6d6 3px,transparent 3px,transparent 6px);background-position:0 -0px"></div>
<div style="left:394px;top:595px;width:1px;height:48px;background:repeating-linear-gradient(to bottom,#d6d6d6 0,#d6d6d6 3px,transparent 3px,transparent 6px);background-position:0 -0px"></div>
<div style="left:394px;top:643px;width:1px;height:33px;background:repeating-linear-gradient(to bottom,#d6d6d6 0,#d6d6d6 3px,transparent 3px,transparent 6px);background-position:0 -0px"></div>
<div style="left:394px;top:676px;width:1px;height:33px;background:repeating-linear-gradient(to bottom,#d6d6d6 0,#d6d6d6 3px,transparent 3px,transparent 6px);background-position:0 -0px"></div>
<div style="left:394px;top:709px;width:1px;height:18px;background:repeating-linear-gradient(to bottom,#d6d6d6 0,#d6d6d6 3px,transparent 3px,transparent 6px);background-position:0 -0px"></div>
<div style="left:465px;top:338px;width:1px;height:44px;background:repeating-linear-gradient(to bottom,#d6d6d6 0,#d6d6d6 3px,transparent 3px,transparent 6px);background-position:0 -1px"></div>
<div style="left:465px;top:382px;width:1px;height:33px;background:repeating-linear-gradient(to bottom,#d6d6d6 0,#d6d6d6 3px,transparent 3px,transparent 6px);background-position:0 -0px"></div>
<div style="left:465px;top:415px;width:1px;height:33px;background:repeating-linear-gradient(to bottom,#d6d6d6 0,#d6d6d6 3px,transparent 3px,transparent 6px);background-position:0 -0px"></div>
<div style="left:465px;top:448px;width:1px;height:33px;background:repeating-linear-gradient(to bottom,#d6d6d6 0,#d6d6d6 3px,transparent 3px,transparent 6px);background-position:0 -0px"></div>
<div style="left:465px;top:481px;width:1px;height:48px;background:repeating-linear-gradient(to bottom,#d6d6d6 0,#d6d6d6 3px,transparent 3px,transparent 6px);background-position:0 -0px"></div>
<div style="left:465px;top:529px;width:1px;height:33px;background:repeating-linear-gradient(to bottom,#d6d6d6 0,#d6d6d6 3px,transparent 3px,transparent 6px);background-position:0 -0px"></div>
<div style="left:465px;top:562px;width:1px;height:33px;background:repeating-linear-gradient(to bottom,#d6d6d6 0,#d6d6d6 3px,transparent 3px,transparent 6px);background-position:0 -0px"></div>
<div style="left:465px;top:595px;width:1px;height:48px;background:repeating-linear-gradient(to bottom,#d6d6d6 0,#d6d6d6 3px,transparent 3px,transparent 6px);background-position:0 -0px"></div>
<div style="left:465px;top:643px;width:1px;height:33px;background:repeating-linear-gradient(to bottom,#d6d6d6 0,#d6d6d6 3px,transparent 3px,transparent 6px);background-position:0 -0px"></div>
<div style="left:465px;top:676px;width:1px;height:33px;background:repeating-linear-gradient(to bottom,#d6d6d6 0,#d6d6d6 3px,transparent 3px,transparent 6px);background-position:0 -0px"></div>
<div style="left:465px;top:709px;width:1px;height:18px;background:repeating-linear-gradient(to bottom,#d6d6d6 0,#d6d6d6 3px,transparent 3px,transparent 6px);background-position:0 -0px"></div>
<div style="left:529px;top:338px;width:1px;height:44px;background:repeating-linear-gradient(to bottom,#d6d6d6 0,#d6d6d6 3px,transparent 3px,transparent 6px);background-position:0 -1px"></div>
<div style="left:529px;top:382px;width:1px;height:33px;background:repeating-linear-gradient(to bottom,#d6d6d6 0,#d6d6d6 3px,transparent 3px,transparent 6px);background-position:0 -0px"></div>
<div style="left:529px;top:415px;width:1px;height:33px;background:repeating-linear-gradient(to bottom,#d6d6d6 0,#d6d6d6 3px,transparent 3px,transparent 6px);background-position:0 -0px"></div>
<div style="left:529px;top:448px;width:1px;height:33px;background:repeating-linear-gradient(to bottom,#d6d6d6 0,#d6d6d6 3px,transparent 3px,transparent 6px);background-position:0 -0px"></div>
<div style="left:529px;top:481px;width:1px;height:48px;background:repeating-linear-gradient(to bottom,#d6d6d6 0,#d6d6d6 3px,transparent 3px,transparent 6px);background-position:0 -0px"></div>
<div style="left:529px;top:529px;width:1px;height:33px;background:repeating-linear-gradient(to bottom,#d6d6d6 0,#d6d6d6 3px,transparent 3px,transparent 6px);background-position:0 -0px"></div>
<div style="left:529px;top:562px;width:1px;height:33px;background:repeating-linear-gradient(to bottom,#d6d6d6 0,#d6d6d6 3px,transparent 3px,transparent 6px);background-position:0 -0px"></div>
<div style="left:529px;top:595px;width:1px;height:48px;background:repeating-linear-gradient(to bottom,#d6d6d6 0,#d6d6d6 3px,transparent 3px,transparent 6px);background-position:0 -0px"></div>
<div style="left:529px;top:643px;width:1px;height:33px;background:repeating-linear-gradient(to bottom,#d6d6d6 0,#d6d6d6 3px,transparent 3px,transparent 6px);background-position:0 -0px"></div>
<div style="left:529px;top:676px;width:1px;height:33px;background:repeating-linear-gradient(to bottom,#d6d6d6 0,#d6d6d6 3px,transparent 3px,transparent 6px);background-position:0 -0px"></div>
<div style="left:529px;top:709px;width:1px;height:18px;background:repeating-linear-gradient(to bottom,#d6d6d6 0,#d6d6d6 3px,transparent 3px,transparent 6px);background-position:0 -0px"></div>
<div style="left:593px;top:338px;width:1px;height:44px;background:repeating-linear-gradient(to bottom,#d6d6d6 0,#d6d6d6 3px,transparent 3px,transparent 6px);background-position:0 -1px"></div>
<div style="left:593px;top:382px;width:1px;height:33px;background:repeating-linear-gradient(to bottom,#d6d6d6 0,#d6d6d6 3px,transparent 3px,transparent 6px);background-position:0 -0px"></div>
<div style="left:593px;top:415px;width:1px;height:33px;background:repeating-linear-gradient(to bottom,#d6d6d6 0,#d6d6d6 3px,transparent 3px,transparent 6px);background-position:0 -0px"></div>
<div style="left:593px;top:448px;width:1px;height:33px;background:repeating-linear-gradient(to bottom,#d6d6d6 0,#d6d6d6 3px,transparent 3px,transparent 6px);background-position:0 -0px"></div>
<div style="left:593px;top:481px;width:1px;height:48px;background:repeating-linear-gradient(to bottom,#d6d6d6 0,#d6d6d6 3px,transparent 3px,transparent 6px);background-position:0 -0px"></div>
<div style="left:593px;top:529px;width:1px;height:33px;background:repeating-linear-gradient(to bottom,#d6d6d6 0,#d6d6d6 3px,transparent 3px,transparent 6px);background-position:0 -0px"></div>
<div style="left:593px;top:562px;width:1px;height:33px;background:repeating-linear-gradient(to bottom,#d6d6d6 0,#d6d6d6 3px,transparent 3px,transparent 6px);background-position:0 -0px"></div>
<div style="left:593px;top:595px;width:1px;height:48px;background:repeating-linear-gradient(to bottom,#d6d6d6 0,#d6d6d6 3px,transparent 3px,transparent 6px);background-position:0 -0px"></div>
<div style="left:593px;top:643px;width:1px;height:33px;background:repeating-linear-gradient(to bottom,#d6d6d6 0,#d6d6d6 3px,transparent 3px,transparent 6px);background-position:0 -0px"></div>
<div style="left:593px;top:676px;width:1px;height:33px;background:repeating-linear-gradient(to bottom,#d6d6d6 0,#d6d6d6 3px,transparent 3px,transparent 6px);background-position:0 -0px"></div>
<div style="left:593px;top:709px;width:1px;height:18px;background:repeating-linear-gradient(to bottom,#d6d6d6 0,#d6d6d6 3px,transparent 3px,transparent 6px);background-position:0 -0px"></div>
<div style="left:676px;top:338px;width:1px;height:44px;background:repeating-linear-gradient(to bottom,#d6d6d6 0,#d6d6d6 3px,transparent 3px,transparent 6px);background-position:0 -1px"></div>
<div style="left:676px;top:382px;width:1px;height:33px;background:repeating-linear-gradient(to bottom,#d6d6d6 0,#d6d6d6 3px,transparent 3px,transparent 6px);background-position:0 -0px"></div>
<div style="left:676px;top:415px;width:1px;height:33px;background:repeating-linear-gradient(to bottom,#d6d6d6 0,#d6d6d6 3px,transparent 3px,transparent 6px);background-position:0 -0px"></div>
<div style="left:676px;top:448px;width:1px;height:33px;background:repeating-linear-gradient(to bottom,#d6d6d6 0,#d6d6d6 3px,transparent 3px,transparent 6px);background-position:0 -0px"></div>
<div style="left:676px;top:481px;width:1px;height:48px;background:repeating-linear-gradient(to bottom,#d6d6d6 0,#d6d6d6 3px,transparent 3px,transparent 6px);background-position:0 -0px"></div>
<div style="left:676px;top:529px;width:1px;height:33px;background:repeating-linear-gradient(to bottom,#d6d6d6 0,#d6d6d6 3px,transparent 3px,transparent 6px);background-position:0 -0px"></div>
<div style="left:676px;top:562px;width:1px;height:33px;background:repeating-linear-gradient(to bottom,#d6d6d6 0,#d6d6d6 3px,transparent 3px,transparent 6px);background-position:0 -0px"></div>
<div style="left:676px;top:595px;width:1px;height:48px;background:repeating-linear-gradient(to bottom,#d6d6d6 0,#d6d6d6 3px,transparent 3px,transparent 6px);background-position:0 -0px"></div>
<div style="left:676px;top:643px;width:1px;height:33px;background:repeating-linear-gradient(to bottom,#d6d6d6 0,#d6d6d6 3px,transparent 3px,transparent 6px);background-position:0 -0px"></div>
<div style="left:676px;top:676px;width:1px;height:33px;background:repeating-linear-gradient(to bottom,#d6d6d6 0,#d6d6d6 3px,transparent 3px,transparent 6px);background-position:0 -0px"></div>
<div style="left:676px;top:709px;width:1px;height:18px;background:repeating-linear-gradient(to bottom,#d6d6d6 0,#d6d6d6 3px,transparent 3px,transparent 6px);background-position:0 -0px"></div>
<div style="left:758px;top:338px;width:1px;height:44px;background:repeating-linear-gradient(to bottom,#d6d6d6 0,#d6d6d6 3px,transparent 3px,transparent 6px);background-position:0 -1px"></div>
<div style="left:758px;top:382px;width:1px;height:33px;background:repeating-linear-gradient(to bottom,#d6d6d6 0,#d6d6d6 3px,transparent 3px,transparent 6px);background-position:0 -0px"></div>
<div style="left:758px;top:415px;width:1px;height:33px;background:repeating-linear-gradient(to bottom,#d6d6d6 0,#d6d6d6 3px,transparent 3px,transparent 6px);background-position:0 -0px"></div>
<div style="left:758px;top:448px;width:1px;height:33px;background:repeating-linear-gradient(to bottom,#d6d6d6 0,#d6d6d6 3px,transparent 3px,transparent 6px);background-position:0 -0px"></div>
<div style="left:758px;top:481px;width:1px;height:48px;background:repeating-linear-gradient(to bottom,#d6d6d6 0,#d6d6d6 3px,transparent 3px,transparent 6px);background-position:0 -0px"></div>
<div style="left:758px;top:529px;width:1px;height:33px;background:repeating-linear-gradient(to bottom,#d6d6d6 0,#d6d6d6 3px,transparent 3px,transparent 6px);background-position:0 -0px"></div>
<div style="left:758px;top:562px;width:1px;height:33px;background:repeating-linear-gradient(to bottom,#d6d6d6 0,#d6d6d6 3px,transparent 3px,transparent 6px);background-position:0 -0px"></div>
<div style="left:758px;top:595px;width:1px;height:48px;background:repeating-linear-gradient(to bottom,#d6d6d6 0,#d6d6d6 3px,transparent 3px,transparent 6px);background-position:0 -0px"></div>
<div style="left:758px;top:643px;width:1px;height:33px;background:repeating-linear-gradient(to bottom,#d6d6d6 0,#d6d6d6 3px,transparent 3px,transparent 6px);background-position:0 -0px"></div>
<div style="left:758px;top:676px;width:1px;height:33px;background:repeating-linear-gradient(to bottom,#d6d6d6 0,#d6d6d6 3px,transparent 3px,transparent 6px);background-position:0 -0px"></div>
<div style="left:758px;top:709px;width:1px;height:18px;background:repeating-linear-gradient(to bottom,#d6d6d6 0,#d6d6d6 3px,transparent 3px,transparent 6px);background-position:0 -0px"></div>
<div style="left:890px;top:338px;width:1px;height:44px;background:repeating-linear-gradient(to bottom,#d6d6d6 0,#d6d6d6 3px,transparent 3px,transparent 6px);background-position:0 -1px"></div>
<div style="left:890px;top:382px;width:1px;height:33px;background:repeating-linear-gradient(to bottom,#d6d6d6 0,#d6d6d6 3px,transparent 3px,transparent 6px);background-position:0 -0px"></div>
<div style="left:890px;top:415px;width:1px;height:33px;background:repeating-linear-gradient(to bottom,#d6d6d6 0,#d6d6d6 3px,transparent 3px,transparent 6px);background-position:0 -0px"></div>
<div style="left:890px;top:448px;width:1px;height:33px;background:repeating-linear-gradient(to bottom,#d6d6d6 0,#d6d6d6 3px,transparent 3px,transparent 6px);background-position:0 -0px"></div>
<div style="left:890px;top:481px;width:1px;height:48px;background:repeating-linear-gradient(to bottom,#d6d6d6 0,#d6d6d6 3px,transparent 3px,transparent 6px);background-position:0 -0px"></div>
<div style="left:890px;top:529px;width:1px;height:33px;background:repeating-linear-gradient(to bottom,#d6d6d6 0,#d6d6d6 3px,transparent 3px,transparent 6px);background-position:0 -0px"></div>
<div style="left:890px;top:562px;width:1px;height:33px;background:repeating-linear-gradient(to bottom,#d6d6d6 0,#d6d6d6 3px,transparent 3px,transparent 6px);background-position:0 -0px"></div>
<div style="left:890px;top:595px;width:1px;height:48px;background:repeating-linear-gradient(to bottom,#d6d6d6 0,#d6d6d6 3px,transparent 3px,transparent 6px);background-position:0 -0px"></div>
<div style="left:890px;top:643px;width:1px;height:33px;background:repeating-linear-gradient(to bottom,#d6d6d6 0,#d6d6d6 3px,transparent 3px,transparent 6px);background-position:0 -0px"></div>
<div style="left:890px;top:676px;width:1px;height:33px;background:repeating-linear-gradient(to bottom,#d6d6d6 0,#d6d6d6 3px,transparent 3px,transparent 6px);background-position:0 -0px"></div>
<div style="left:890px;top:709px;width:1px;height:18px;background:repeating-linear-gradient(to bottom,#d6d6d6 0,#d6d6d6 3px,transparent 3px,transparent 6px);background-position:0 -0px"></div>
<div style="left:106.4px;top:338px;width:1px;height:389px;background:#d6d6d6"></div>
<div style="left:977.6px;top:338px;width:1px;height:389px;background:#d6d6d6"></div>
</div></div>
<div style="left:1007px;top:61px;width:17px;height:666px;background:#f0f0f0"></div>
<div style="left:1009px;top:137px;width:13px;height:313px;background:#a8a8a8"></div>
<svg style="position:absolute;left:1011px;top:67px" width="9" height="6" viewBox="0 0 9 6"><path d="M0.5 5.3H8.3L4.4 0.6Z" fill="#505050"/></svg>
<svg style="position:absolute;left:1011px;top:716.5px" width="9" height="6" viewBox="0 0 9 6"><path d="M0.5 0.5H8.3L4.4 5.2Z" fill="#505050"/></svg>
<div style="left:987px;top:728px;width:37px;height:1.4px;background:#2a2422"></div>
<div style="left:0px;top:765px;width:984px;height:3px;background:#0a0a0a"></div>
<div style="left:20px;top:765px;width:13px;height:2px;background:#2b6fb0;border-radius:6px 6px 0 0"></div>
<div style="left:246px;top:766px;width:58px;height:1.2px;background:#bdbdbd"></div>
<div style="left:370.5px;top:766px;width:57px;height:1.2px;background:#5a5a5a"></div>
<div style="left:432.4px;top:766px;width:50.6px;height:1.2px;background:#5a5a5a"></div>
</body></html>
